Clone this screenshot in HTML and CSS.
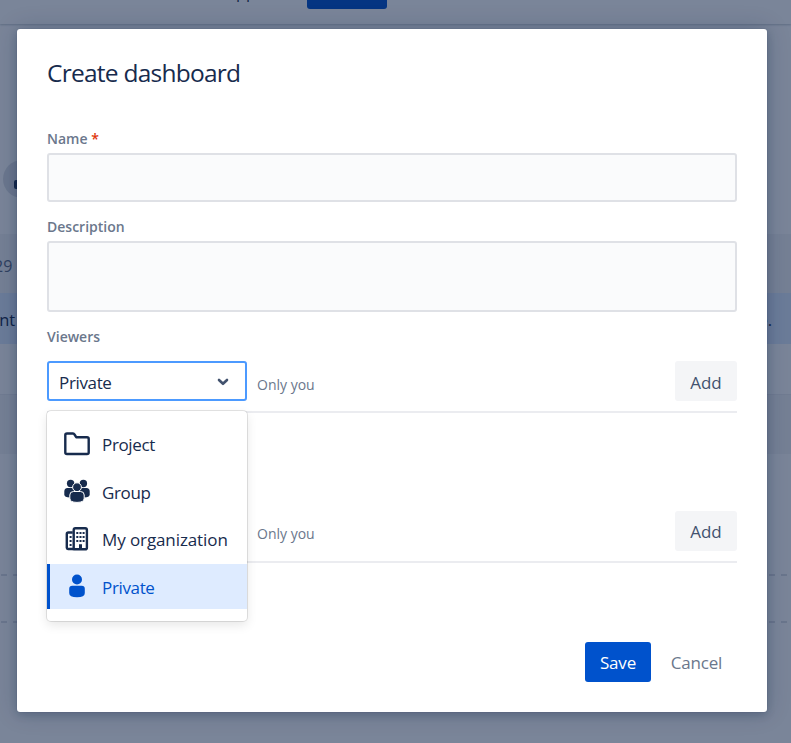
FILE: index.html
```html
<!DOCTYPE html>
<html lang="en">
<head>
<meta charset="utf-8">
<title>Create dashboard</title>
<link rel="stylesheet" href="styles.css">
</head>
<body>
<div class="page">
  <header class="topbar"><span class="topbar-link">Apps</span><span class="topbar-create"></span></header>
  <div class="page-gap"><span class="avatar"><svg width="38" height="38" viewBox="0 0 38 38"><circle cx="19" cy="12" r="5" fill="#5e6c84"/><rect x="11" y="20" width="16" height="9" rx="2" fill="#253858"/></svg></span></div>
  <div class="band band-gray date"><span>29</span></div>
  <div class="band band-blue"><span class="left-text">ant</span><span class="right-text">e.</span></div>
  <div class="band band-white"></div>
  <div class="band band-gray second"></div>
  <svg class="dashes" width="791" height="49" viewBox="0 0 791 49"><path d="M1 1H791M1 48H791" stroke="#dcdfe5" stroke-width="2" stroke-dasharray="6 6"/></svg>
</div>
<div class="overlay">
  <form class="modal">
    <h1 class="title">Create dashboard</h1>
    <label class="label">Name <span class="required">*</span></label>
    <div class="field name-field"></div>
    <label class="label">Description</label>
    <div class="field description-field"></div>
    <label class="label">Viewers</label>
    <div class="access-row">
      <div class="select"><span class="value">Private</span>
        <svg width="12" height="8" viewBox="0 0 12 8"><path d="M2 2L6 5.8L10 2" fill="none" stroke="#42526e" stroke-width="2.6" stroke-linecap="round" stroke-linejoin="round"/></svg>
        <div class="menu">
          <div class="option"><svg width="26" height="24" viewBox="0 0 26 24"><path d="M3 1.5H9Q10 1.5 10.5 2.5L12.2 5.2H23Q24.7 5.2 24.7 6.8V20.5Q24.7 22 23 22H3Q1.3 22 1.3 20.5V3Q1.3 1.5 3 1.5Z" fill="none" stroke="#172b4d" stroke-width="2.4" stroke-linejoin="round"/></svg><span>Project</span></div>
          <div class="option"><svg width="26" height="24" viewBox="0 0 26 24"><g fill="#172b4d"><circle cx="6.6" cy="4.5" r="3.7"/><circle cx="19.4" cy="4.5" r="3.7"/><path d="M3.5 9H22.5Q25.7 9 25.7 12.5V15.5Q25.7 18.5 20 18.5H6Q.3 18.5.3 15.5V12.5Q.3 9 3.5 9Z"/></g><g fill="#172b4d" stroke="#fff"><circle cx="13" cy="8.2" r="4.4"/><path d="M9.5 12.5H16.5Q20.2 12.5 20.2 16V19.2Q20.2 23.4 13 23.4Q5.8 23.4 5.8 19.2V16Q5.8 12.5 9.5 12.5Z"/></g></svg><span>Group</span></div>
          <div class="option"><svg width="26" height="24" viewBox="0 0 26 24"><g fill="none" stroke="#172b4d" stroke-width="2.4" stroke-linejoin="round"><path d="M9 22H4Q2.8 22 2.8 20.8V7Q2.8 5.5 4.3 5.5H8.7"/><path d="M9.7 22.3V3Q9.7 1.3 11.4 1.3H21.2Q22.9 1.3 22.9 3V20.7Q22.9 22.3 21.2 22.3Z"/></g><path d="M12.3 5H14.3V7H12.3ZM15.5 5H17.5V7H15.5ZM18.6 5H20.6V7H18.6ZM12.3 9H14.3V11H12.3ZM15.5 9H17.5V11H15.5ZM18.6 9H20.6V11H18.6ZM12.3 13H14.3V15H12.3ZM15.5 13H17.5V15H15.5ZM18.6 13H20.6V15H18.6ZM15 17.3H18V22H15ZM5.6 9H7.6V11H5.6ZM5.6 13H7.6V15H5.6ZM5.6 17H7.6V19H5.6Z" fill="#172b4d"/></svg><span class="wide">My organization</span></div>
          <div class="option selected"><svg width="26" height="24" viewBox="0 0 26 24"><g fill="#0052cc"><circle cx="13" cy="5.5" r="5"/><path d="M8.3 11.7H17.7Q20.8 11.7 20.8 15V19Q20.8 23.3 13 23.3Q5.2 23.3 5.2 19V15Q5.2 11.7 8.3 11.7Z"/></g></svg><span>Private</span></div>
        </div>
      </div>
      <span class="hint first-hint">Only you</span>
      <button type="button" class="button add">Add</button>
    </div>
    <div class="access-row editors">
      <div class="select-space"></div>
      <span class="hint">Only you</span>
      <button type="button" class="button add second-add">Add</button>
    </div>
    <footer class="actions">
      <button type="button" class="button save">Save</button>
      <button type="button" class="button cancel">Cancel</button>
    </footer>
  </form>
</div>
</body>
</html>
```
FILE: styles.css
```css
* { box-sizing: border-box; }
body { margin: 0; width: 791px; height: 743px; overflow: hidden; position: relative; background: #fff; color: #172b4d; font: 17px "Open Sans", "Noto Sans", sans-serif; }
svg { display: block; flex: none; }
.page { height: 743px; overflow: hidden; }
.topbar { height: 24px; display: flex; align-items: flex-start; padding-left: 226px; box-shadow: 0 1px 2px rgba(9,30,66,.25); }
.topbar-link { width: 81px; line-height: 24px; margin-top: -20px; font-size: 16px; }
.topbar-create { width: 80px; height: 9px; background: #0052cc; border-radius: 0 0 3px 3px; }
.page-gap { height: 210px; padding: 136px 0 0 3px; }
.avatar { display: block; width: 38px; height: 38px; border-radius: 50%; background: #dfe1e6; }
.band { display: flex; align-items: center; justify-content: space-between; overflow: hidden; }
.band-gray { height: 59px; background: #f4f5f7; }
.date { color: #5e6c84; padding-top: 4px; font-size: 16px; }
.date span { margin-left: -6px; }
.band-blue { height: 51px; padding-top: 2px; background: #deebff; font-size: 16.5px; }
.left-text { margin-left: -10px; }
.right-text { margin-right: 19px; }
.band-white { height: 50px; }
.second { height: 60px; border-top: 1px solid #ebecf0; }
.dashes { margin-top: 120px; }
.overlay { position: absolute; inset: 0; padding: 29px 24px 31px 17px; background: rgba(9,30,66,.54); }
.modal { height: 683px; padding: 30px; background: #fff; border-radius: 3px; box-shadow: 0 0 1px rgba(9,30,66,.31), 0 3px 8px rgba(9,30,66,.2), 0 0 24px rgba(9,30,66,.2); }
.title { margin: 0 0 42px; font-size: 24.5px; line-height: 28px; font-weight: 400; letter-spacing: -.75px; }
.label { display: block; height: 20px; margin-bottom: 4px; line-height: 20px; font-size: 14px; font-weight: 600; color: #6b778c; }
.required { color: #de350b; }
.field { border: 2px solid #dfe1e6; border-radius: 3px; background: #fafbfc; margin-bottom: 15px; }
.name-field { height: 49px; }
.description-field { height: 71px; }
.access-row { height: 52px; margin-top: 14px; display: flex; border-bottom: 2px solid #ebecf0; }
.editors { margin-top: 98px; }
.select { position: relative; width: 200px; height: 40px; padding: 2px 16px 0 10px; display: flex; align-items: center; justify-content: space-between; border: 2px solid #4c9aff; border-radius: 3px; background: #fff; }
.select > svg { margin-top: -1px; }
.value { letter-spacing: -.35px; }
.select-space { width: 200px; }
.menu { position: absolute; left: -2px; top: 48px; width: 200px; height: 210px; padding: 10px 0; border-radius: 4px; background: #fff; box-shadow: 0 0 0 1px rgba(0,0,0,.1), 0 4px 11px rgba(0,0,0,.1); }
.option { height: 45px; margin-bottom: 2.67px; padding-left: 17px; display: flex; align-items: center; gap: 12px; white-space: nowrap; }
.option span { padding-top: 2px; letter-spacing: -.35px; }
.option .wide { letter-spacing: -.1px; }
.selected { padding-left: 14px; border-left: 3px solid #0052cc; background: #deebff; color: #0052cc; }
.hint { margin-left: 10px; padding-top: 3px; line-height: 40px; font-size: 14px; color: #6b778c; }
.first-hint { padding-top: 4px; }
.button { border: 0; border-radius: 3px; height: 40px; padding: 2px 0 0; font: 17px "Open Sans", "Noto Sans", sans-serif; }
.add { width: 62px; margin-left: auto; padding-top: 3px; background: #f4f5f7; color: #42526e; }
.second-add { padding-top: 1px; }
.actions { display: flex; justify-content: flex-end; margin-top: 79px; }
.save { width: 66px; padding-top: 1px; color: #fff; background: #0052cc; letter-spacing: -.2px; }
.cancel { width: 86px; padding: 1px 0 0 5px; color: #6b778c; background: transparent; letter-spacing: -.2px; }
```
